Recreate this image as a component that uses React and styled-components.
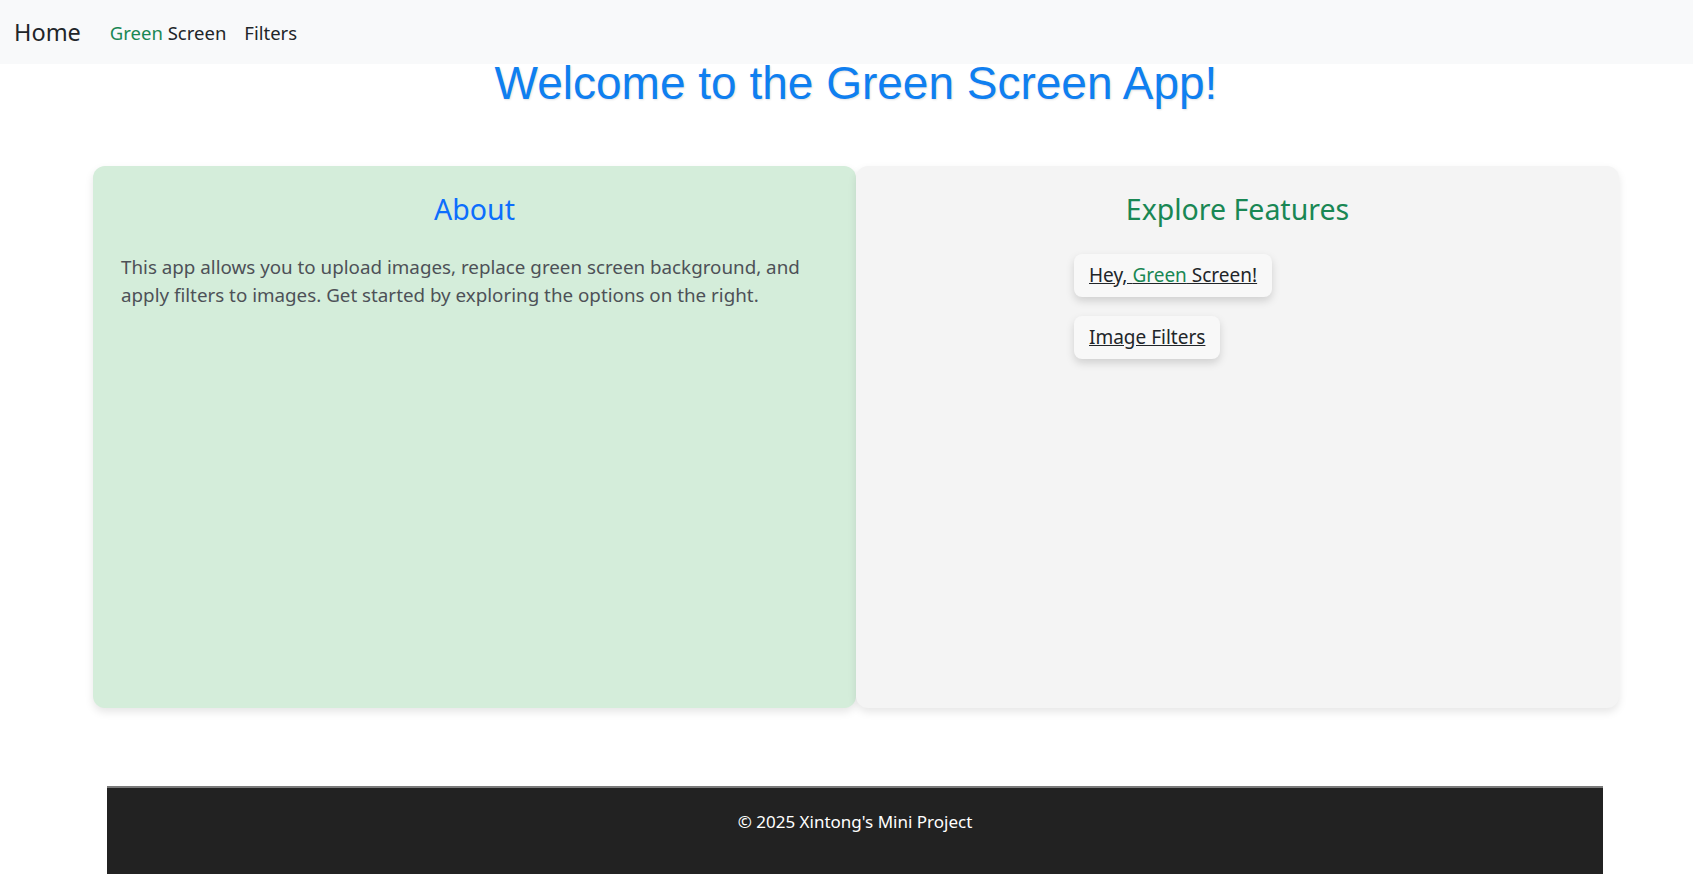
import React from 'react';
import styled, { createGlobalStyle } from 'styled-components';

const GlobalStyle = createGlobalStyle`
    body {
        margin: 0;
        background: #ffffff;
        font-family: "Noto Sans", "Open Sans", Arial, sans-serif;
        color: #212529;
    }
`;

const Navbar = styled.nav`
    display: flex;
    align-items: center;
    height: 64px;
    padding: 0 14px;
    background: #f8f9fa;
`;

const Brand = styled.a`
    font-size: 23.5px;
    color: #212529;
    text-decoration: none;
    margin-right: 20px;
`;

const NavLink = styled.a`
    font-size: 18.5px;
    color: #212529;
    text-decoration: none;
    padding: 0 9px;
`;

const Green = styled.span`
    color: #198754;
`;

const Main = styled.main`
    padding: 0 74px 0 93px;
`;

const Title = styled.h1`
    margin: -1px 0 63px;
    font-family: "Liberation Sans", Arial, sans-serif;
    font-weight: 400;
    font-size: 46px;
    line-height: 40px;
    text-align: center;
    color: #0f7ff0;
    text-shadow: 1px 1px 2px rgba(0, 0, 0, 0.12);
`;

const Row = styled.section`
    display: grid;
    grid-template-columns: 1fr 1fr;
    height: 542px;
`;

const Card = styled.div`
    background: ${p => p.$tone === 'green' ? '#d4edda' : '#f4f4f4'};
    border-radius: 12px;
    box-shadow: 0 4px 8px rgba(0, 0, 0, 0.1);
    padding: 26px 28px;
`;

const CardTitle = styled.h2`
    margin: 0;
    font-size: 28.5px;
    font-weight: 400;
    line-height: 35px;
    text-align: center;
    color: ${p => p.$color};
`;

const Text = styled.p`
    margin: 26px 0 0;
    font-size: 18.8px;
    line-height: 28px;
    color: #4d5157;
`;

const FeatureList = styled.ul`
    list-style: none;
    margin: 27px 0 0;
    padding: 0 0 0 190px;
    display: flex;
    flex-direction: column;
    align-items: flex-start;
    gap: 19px;
`;

const FeatureButton = styled.a`
    display: block;
    padding: 9px 15px;
    font-size: 19px;
    line-height: 25px;
    color: #212529;
    text-decoration: underline;
    background: #f8f8f8;
    border-radius: 8px;
    box-shadow: 0 4px 8px rgba(0, 0, 0, 0.15);
`;

const Footer = styled.footer`
    margin: 78px 90px 0 107px;
    padding: 22px 0 40px;
    background: #222222;
    border-top: 2px solid #7a7a7a;
    color: #ffffff;
    font-size: 17px;
    line-height: 24px;
    text-align: center;
`;

export default function App() {
    return (
        <>
            <GlobalStyle />
            <Navbar>
                <Brand href="#">Home</Brand>
                <NavLink href="#"><Green>Green</Green> Screen</NavLink>
                <NavLink href="#">Filters</NavLink>
            </Navbar>
            <Main>
                <Title>Welcome to the Green Screen App!</Title>
                <Row>
                    <Card $tone="green">
                        <CardTitle $color="#0d6efd">About</CardTitle>
                        <Text>
                            This app allows you to upload images, replace green screen background, and apply filters to images. Get started by exploring the options on the right.
                        </Text>
                    </Card>
                    <Card>
                        <CardTitle $color="#198754">Explore Features</CardTitle>
                        <FeatureList>
                            <li><FeatureButton href="#">Hey, <Green>Green</Green> Screen!</FeatureButton></li>
                            <li><FeatureButton href="#">Image Filters</FeatureButton></li>
                        </FeatureList>
                    </Card>
                </Row>
            </Main>
            <Footer>© 2025 Xintong's Mini Project</Footer>
        </>
    );
}
